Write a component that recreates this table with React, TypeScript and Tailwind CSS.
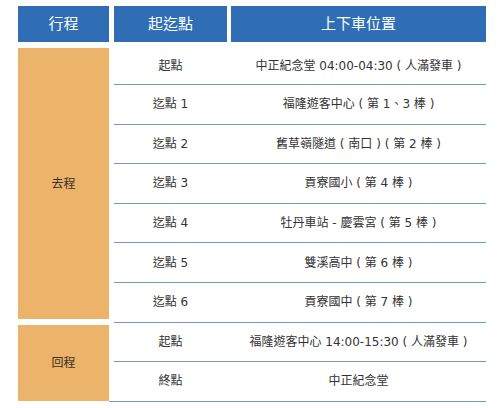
import React from "react";

const font = { fontFamily: '"DejaVu Sans", "Noto Sans CJK TC", sans-serif' };

type Row = { a: string; b: string };

const go: Row[] = [
  { a: "起點", b: "中正紀念堂 04:00-04:30 ( 人滿發車 )" },
  { a: "迄點 1", b: "福隆遊客中心 ( 第 1、3 棒 )" },
  { a: "迄點 2", b: "舊草嶺隧道 ( 南口 ) ( 第 2 棒 )" },
  { a: "迄點 3", b: "貢寮國小 ( 第 4 棒 )" },
  { a: "迄點 4", b: "牡丹車站 - 慶雲宮 ( 第 5 棒 )" },
  { a: "迄點 5", b: "雙溪高中 ( 第 6 棒 )" },
  { a: "迄點 6", b: "貢寮國中 ( 第 7 棒 )" },
];

const back: Row[] = [
  { a: "起點", b: "福隆遊客中心 14:00-15:30 ( 人滿發車 )" },
  { a: "終點", b: "中正紀念堂" },
];

function RowView({ r, h, last }: { r: Row; h: string; last?: boolean }) {
  return (
    <div
      className={`flex items-center border-b border-[#7596b4] text-[12px] text-[#333333] ${h} ${
        last ? "-ml-[5px] pl-[5px]" : ""
      }`}
    >
      <div className="w-[113px] text-center">{r.a}</div>
      <div className="w-[4px]" />
      <div className="flex-1 text-center whitespace-nowrap">{r.b}</div>
    </div>
  );
}

export default function App() {
  return (
    <div className="bg-white w-[500px] h-[408px] pt-[6px] pl-[18px]" style={font}>
      <div className="flex gap-[5px] h-[36px] text-white text-[15px]">
        <div className="w-[91px] bg-[#2f6eb5] flex items-center justify-center">行程</div>
        <div className="w-[113px] bg-[#2f6eb5] flex items-center justify-center -mr-px">起迄點</div>
        <div className="w-[255px] bg-[#2f6eb5] flex items-center justify-center">上下車位置</div>
      </div>
      <div className="flex gap-[5px] mt-[6px]">
        <div className="w-[91px] flex flex-col">
          <div className="h-[271px] bg-[#ecb36b] flex items-center justify-center text-[12px] text-[#3a3128]">
            去程
          </div>
          <div className="h-[76px] mt-[6px] bg-[#ecb36b] flex items-center justify-center text-[12px] text-[#3a3128]">
            回程
          </div>
        </div>
        <div className="w-[372px] flex flex-col">
          <RowView r={go[0]} h="h-[37px]" />
          {go.slice(1).map((r, i) => (
            <RowView key={i} r={r} h="h-[39.6px]" />
          ))}
          <RowView r={back[0]} h="h-[39.6px]" />
          <RowView r={back[1]} h="h-[39.6px]" last />
        </div>
      </div>
    </div>
  );
}
